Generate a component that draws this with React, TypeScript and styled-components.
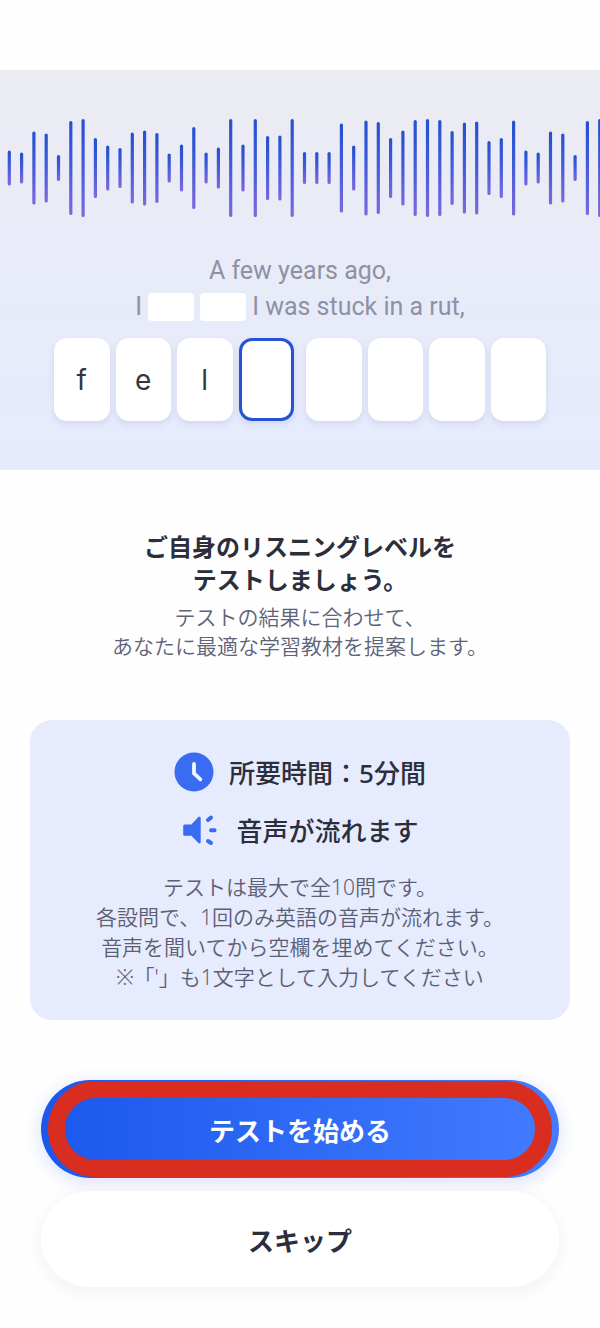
import React from "react";
import styled, { createGlobalStyle } from "styled-components";

const GlobalStyle = createGlobalStyle`
  *, *::before, *::after { box-sizing: border-box; }
  body {
    margin: 0;
    background: #fefefe;
    color: #2c2e3c;
    font-family: "Noto Sans CJK JP", sans-serif;
  }
`;

const Page = styled.main`
  padding-top: 70px;
`;

const Hero = styled.section`
  display: flex;
  flex-direction: column;
  align-items: center;
  padding: 49px 0;
  background: linear-gradient(180deg, #ecebf3 0%, #e8ebf8 50%, #e5ebfe 100%);
`;

const Wave = styled.svg`
  display: block;
  width: 100%;
  height: 98px;
`;

const Sentence = styled.p`
  margin: 36px 0 13px;
  font-family: Roboto, sans-serif;
  font-size: 25px;
  line-height: 36px;
  text-align: center;
  color: #8f91a3;
`;

const SentenceLine = styled.span`
  display: flex;
  align-items: center;
  justify-content: center;
  gap: 6px;
`;

const Blank = styled.span`
  width: 46px;
  height: 28px;
  border-radius: 4px;
  background: #ffffff;
`;

const Answer = styled.div`
  display: flex;
  gap: 12px;
  width: 82%;
`;

const Word = styled.div`
  display: flex;
  flex: 1;
  gap: 6px;
  min-width: 0;
`;

const Letter = styled.input<{ $active?: boolean }>`
  flex: 1;
  min-width: 0;
  height: 83px;
  padding: 0;
  border: 3px solid ${(p) => (p.$active ? "#2553d3" : "#ffffff")};
  border-radius: 13px;
  background: #ffffff;
  box-shadow: 0 3px 6px rgba(90, 80, 140, 0.13);
  color: #36363e;
  font-family: Inter, sans-serif;
  font-size: 28px;
  text-align: center;
  outline: none;
`;

const Intro = styled.section`
  padding: 59px 24px 60px;
  text-align: center;
`;

const Title = styled.h1`
  margin: 0;
  font-size: 24px;
  font-weight: 700;
  line-height: 33px;
`;

const Lead = styled.p`
  margin: 7px 0 0;
  font-size: 21px;
  font-weight: 350;
  line-height: 29px;
  color: #606276;
`;

const Card = styled.section`
  display: flex;
  flex-direction: column;
  align-items: center;
  margin: 0 30px 60px;
  padding: 32px 0 28px;
  border-radius: 22px;
  background: #e6ebfe;
  font-family: "Noto Sans", "Noto Sans CJK JP", sans-serif;
`;

const Fact = styled.h2`
  display: flex;
  align-items: center;
  gap: 15px;
  height: 40px;
  margin: 0 0 18px;
  font-size: 26px;
  font-weight: 500;
  line-height: 40px;
`;

const FactLabel = styled.span`
  padding-top: 2px;
`;

const FactIcon = styled.svg`
  width: 40px;
  height: 40px;
`;

const Notes = styled.p`
  margin: 4px 0 0;
  font-size: 21px;
  font-weight: 350;
  line-height: 30px;
  text-align: center;
  color: #5c5f74;
`;

const Actions = styled.div`
  display: flex;
  flex-direction: column;
  gap: 13px;
  padding: 0 41px 41px;
`;

const PillButton = styled.button<{ $primary?: boolean }>`
  position: relative;
  height: ${(p) => (p.$primary ? 98 : 96)}px;
  padding: 0;
  border: 0;
  border-radius: 49px;
  background: ${(p) =>
    p.$primary ? "linear-gradient(90deg, #1a58ec, #437cff)" : "#ffffff"};
  box-shadow: ${(p) =>
    p.$primary
      ? "0 4px 18px rgba(60, 100, 240, 0.2)"
      : "0 4px 18px rgba(40, 40, 60, 0.06)"};
  color: ${(p) => (p.$primary ? "#ffffff" : "#2c2e3c")};
  font-family: inherit;
  font-size: 26px;
  font-weight: 700;
  cursor: pointer;
`;

const Ring = styled.span`
  position: absolute;
  inset: 1px 7px;
  border: 17px solid #d92d20;
  border-radius: 48px;
`;

const BAR_HEIGHTS = [
  35, 31, 73, 69, 26, 94, 98, 60, 45, 40, 71, 75, 70, 29, 47, 82, 31, 41, 98,
  47, 98, 64, 65, 98, 32, 32, 32, 89, 45, 95, 92, 60, 75, 96, 98, 96, 74, 91,
  93, 54, 60, 95, 35, 31, 73, 69, 26, 94, 98,
];

const WORDS = [
  ["f", "e", "l", ""],
  ["", "", "", ""],
];
const ACTIVE_LETTER = 3;

function Waveform() {
  return (
    <Wave viewBox="0 0 600 98" preserveAspectRatio="xMidYMid slice" aria-hidden="true">
      <defs>
        <linearGradient id="bar" x1="0" y1="0" x2="0" y2="1">
          <stop offset="0" stopColor="#2450cf" />
          <stop offset="0.4" stopColor="#3a5ada" />
          <stop offset="1" stopColor="#7e68df" />
        </linearGradient>
      </defs>
      {BAR_HEIGHTS.map((h, i) => (
        <rect
          key={i}
          x={7.7 + i * 12.3}
          y={49 - h / 2}
          width="3.2"
          height={h}
          rx="1.6"
          fill="url(#bar)"
        />
      ))}
    </Wave>
  );
}

export default function App() {
  return (
    <>
      <GlobalStyle />
      <Page>
        <Hero>
          <Waveform />
          <Sentence>
            <SentenceLine>A few years ago,</SentenceLine>
            <SentenceLine>
              <span>I</span>
              <Blank />
              <Blank />
              <span>I was stuck in a rut,</span>
            </SentenceLine>
          </Sentence>
          <Answer>
            {WORDS.map((word, w) => (
              <Word key={w}>
                {word.map((letter, i) => {
                  const index = w * 4 + i;
                  return (
                    <Letter
                      key={index}
                      $active={index === ACTIVE_LETTER}
                      aria-label={`${index + 1}文字目`}
                      maxLength={1}
                      defaultValue={letter}
                    />
                  );
                })}
              </Word>
            ))}
          </Answer>
        </Hero>

        <Intro>
          <Title>
            ご自身のリスニングレベルを
            <br />
            テストしましょう。
          </Title>
          <Lead>
            テストの結果に合わせて、
            <br />
            あなたに最適な学習教材を提案します。
          </Lead>
        </Intro>

        <Card>
          <Fact>
            <FactIcon viewBox="0 0 40 40" aria-hidden="true">
              <circle cx="20" cy="20" r="19.5" fill="#3a6cf2" />
              <path
                d="M20 12V21.4l6.4 6"
                fill="none"
                stroke="#f4f6ff"
                strokeWidth="3.8"
                strokeLinecap="round"
                strokeLinejoin="round"
              />
            </FactIcon>
            <FactLabel>所要時間：5分間</FactLabel>
          </Fact>
          <Fact>
            <FactIcon viewBox="0 0 40 40" aria-hidden="true">
              <path
                d="M3.8 14.6h6.6l7-7.5c.9-.9 2.3-.3 2.3 1v24c0 1.3-1.4 1.9-2.3 1l-7-7.3H3.8c-.9 0-1.6-.7-1.6-1.6v-8c0-.9.7-1.6 1.6-1.6z"
                fill="#3a6cf2"
              />
              <path
                d="M27 10l3-2.4M30 20.2h3.6M27 31l3 2"
                fill="none"
                stroke="#3a6cf2"
                strokeWidth="4"
                strokeLinecap="round"
              />
            </FactIcon>
            <FactLabel>音声が流れます</FactLabel>
          </Fact>
          <Notes>
            テストは最大で全10問です。
            <br />
            各設問で、1回のみ英語の音声が流れます。
            <br />
            音声を聞いてから空欄を埋めてください。
            <br />
            ※「'」も1文字として入力してください
          </Notes>
        </Card>

        <Actions>
          <PillButton type="button" $primary>
            テストを始める
            <Ring />
          </PillButton>
          <PillButton type="button">スキップ</PillButton>
        </Actions>
      </Page>
    </>
  );
}
